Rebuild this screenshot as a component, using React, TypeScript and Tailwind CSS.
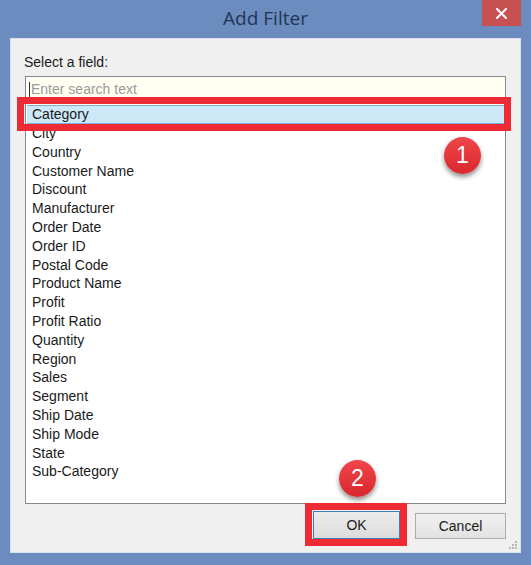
import React from "react"

const fields = [
  "City",
  "Country",
  "Customer Name",
  "Discount",
  "Manufacturer",
  "Order Date",
  "Order ID",
  "Postal Code",
  "Product Name",
  "Profit",
  "Profit Ratio",
  "Quantity",
  "Region",
  "Sales",
  "Segment",
  "Ship Date",
  "Ship Mode",
  "State",
  "Sub-Category",
]

function Badge({ n }: { n: string }) {
  return (
    <div className="w-[37px] h-[37px] rounded-full bg-gradient-to-b from-[#f0454a] to-[#d8262d] shadow-[0_3px_5px_rgba(0,0,0,0.45)] flex items-center justify-center text-white text-[23px] font-[Arial,sans-serif]">
      {n}
    </div>
  )
}

export default function App() {
  return (
    <div className="w-[531px] h-[565px] bg-[#6c8cbf] flex flex-col px-[10px] pb-[12px] font-['Liberation_Sans',Arial,sans-serif] text-[#1a1a1a] overflow-hidden">
      {/* Title bar */}
      <div className="h-[38px] relative flex items-center justify-center">
        <span className="text-[19px] text-[#1f3656] font-['Open_Sans',sans-serif] -mt-[1px]">Add Filter</span>
        <div className="absolute top-0 right-0 w-[39px] h-[26px] bg-[#c75050] flex items-center justify-center">
          <svg width="11" height="11" viewBox="0 0 11 11">
            <path d="M1 1 L10 10 M10 1 L1 10" stroke="white" strokeWidth="2" strokeLinecap="square" />
          </svg>
        </div>
      </div>

      {/* Client area */}
      <div className="flex-1 bg-[#f0f0f0] border border-[#d9e2ef] relative flex flex-col pt-[15px] pl-[13px] pr-[14px]">
        <div className="text-[14px] leading-[17px] h-[17px]">Select a field:</div>

        {/* List box */}
        <div className="mt-[5px] ml-[1px] h-[428px] bg-white border border-[#828790] flex flex-col">
          <div className="h-[25px] bg-[#fffff2] border-b border-[#b5b5b5] flex items-center pl-[3px]">
            <div className="w-[1px] h-[15px] bg-[#333]" />
            <span className="text-[14px] text-[#9a9a9a] ml-[1px]">Enter search text</span>
          </div>
          <div className="pt-[3px] px-[1px] flex flex-col">
            <div className="relative h-[19px] bg-[#cde8f7] border-y border-[#7db0d8] flex items-center pl-[5px] text-[14px]">
              Category
              <div className="absolute -left-[10px] -right-[7px] -top-[9px] -bottom-[8px] border-[7px] border-[#ee2a35]" />
            </div>
            {fields.map((f) => (
              <div key={f} className="h-[18.8px] leading-[18.8px] pl-[5px] text-[14px]">
                {f}
              </div>
            ))}
          </div>
        </div>

        {/* Buttons */}
        <div className="mt-[7px] flex justify-end gap-[15px]">
          <div className="relative">
            <button className="w-[87px] h-[28px] border border-[#3c7fb1] bg-gradient-to-b from-[#ececec] to-[#dcdcdc] text-[14px]">
              OK
            </button>
            <div className="absolute -left-[8px] -right-[7px] -top-[8px] -bottom-[7px] border-[7px] border-[#ee2a35]" />
          </div>
          <button className="w-[91px] h-[26px] mt-[2px] border border-[#acacac] bg-gradient-to-b from-[#f0f0f0] to-[#e3e3e3] text-[14px]">
            Cancel
          </button>
        </div>

        {/* Resize grip */}
        <svg className="absolute right-[2px] bottom-[2px]" width="10" height="10" viewBox="0 0 10 10">
          <rect x="7" y="1" width="2" height="2" fill="#b8b8b8" />
          <rect x="4" y="4" width="2" height="2" fill="#b8b8b8" />
          <rect x="7" y="4" width="2" height="2" fill="#b8b8b8" />
          <rect x="1" y="7" width="2" height="2" fill="#b8b8b8" />
          <rect x="4" y="7" width="2" height="2" fill="#b8b8b8" />
          <rect x="7" y="7" width="2" height="2" fill="#b8b8b8" />
        </svg>

        {/* Step badges */}
        <div className="absolute left-[433px] top-[98px]">
          <Badge n="1" />
        </div>
        <div className="absolute left-[328px] top-[421px]">
          <Badge n="2" />
        </div>
      </div>
    </div>
  )
}
